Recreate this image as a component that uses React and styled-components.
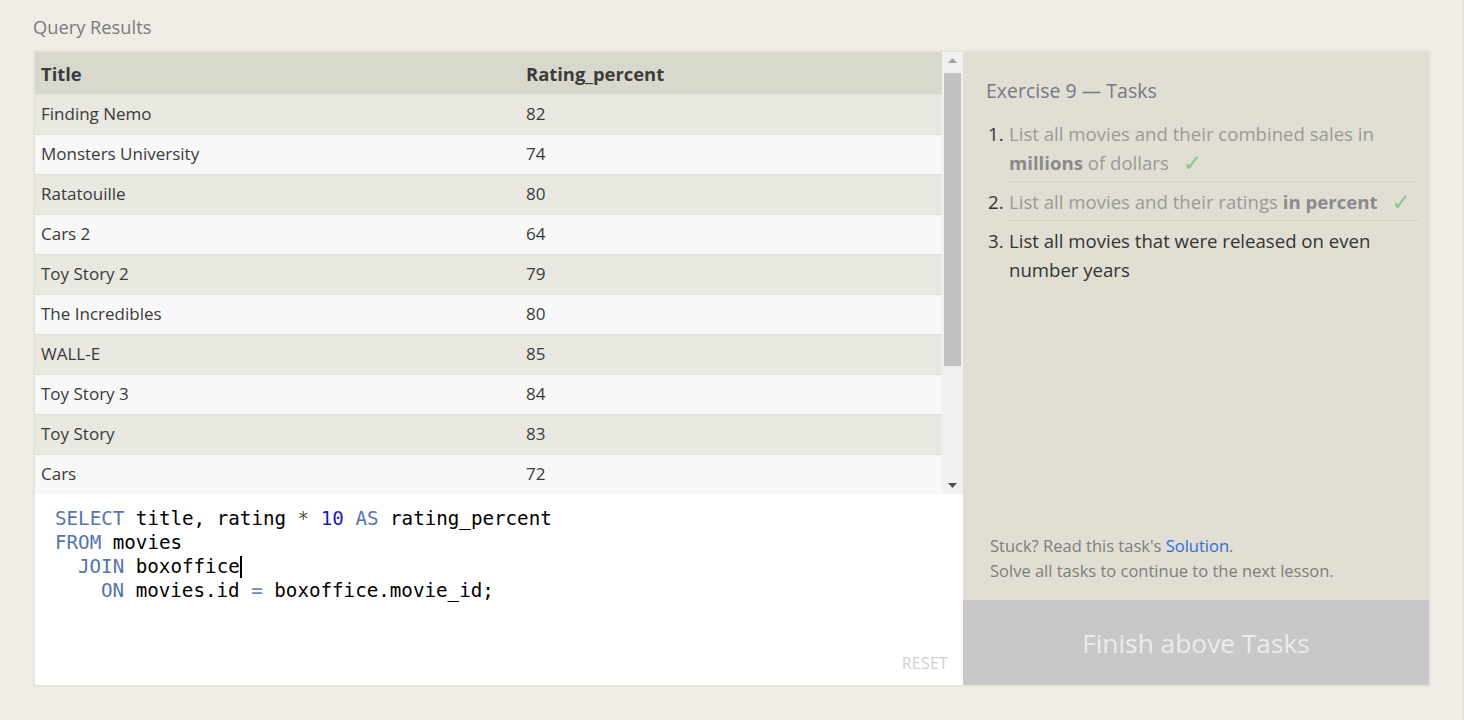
import React from "react";
import styled, { createGlobalStyle } from "styled-components";

const Global = createGlobalStyle`
  html, body { margin: 0; padding: 0; background: #efede6; }
  body { font-family: "Open Sans", "Noto Sans", sans-serif; color: #333; }
  * { box-sizing: border-box; }
`;

const Page = styled.div`
  width: 1464px;
  height: 720px;
  padding: 15px 34px 0 33px;
  border-right: 1px solid #e2e0d8;
`;

const Heading = styled.div`
  font-size: 18.3px;
  line-height: 24px;
  color: #7b7b7b;
  margin-bottom: 11px;
`;

const Panel = styled.div`
  display: flex;
  width: 1398px;
  border: 2px solid #e6e5dc;
`;

const LeftCol = styled.div`
  display: flex;
  flex-direction: column;
  width: 928px;
`;

const TableWrap = styled.div`
  display: flex;
  height: 442px;
  background: #f8f8f8;
`;

const TableArea = styled.div`
  flex: 1;
  overflow: hidden;
`;

const Table = styled.table`
  width: 100%;
  border-collapse: collapse;
  font-size: 17px;
`;

const Th = styled.th`
  text-align: left;
  font-weight: 700;
  font-size: 18.4px;
  color: #3c3c3c;
  background: #d9d8cc;
  height: 42px;
  padding: 1px 6px 0;
  border-bottom: 1px solid #e3e2dc;
  width: ${(p) => p.$w || "auto"};
`;

const Tr = styled.tr`
  background: ${(p) => (p.$odd ? "#e9e8e1" : "#f8f8f8")};
`;

const Td = styled.td`
  height: 40px;
  padding: 0 6px 1px;
  color: #3a3a3a;
  border-bottom: 1px solid #e0dfda;
`;

const Scrollbar = styled.div`
  width: 21px;
  background: #f0f0f0;
  display: flex;
  flex-direction: column;
  align-items: center;
`;

const Arrow = styled.div`
  height: 17px;
  width: 100%;
  display: flex;
  align-items: center;
  justify-content: center;
`;

const Thumb = styled.div`
  width: 17px;
  height: 293px;
  margin-top: 4px;
  background: #c1c1c1;
`;

const Track = styled.div`
  flex: 1;
`;

const Editor = styled.div`
  position: relative;
  height: 191px;
  background: #fff;
  padding: 13px 20px;
  font-family: "DejaVu Sans Mono", "Liberation Mono", monospace;
  font-size: 19.2px;
  line-height: 24px;
  color: #000;
`;

const CodeLine = styled.div`
  white-space: pre;
  padding-left: ${(p) => p.$indent || 0}px;
`;

const Kw = styled.span`
  color: #5574ae;
`;
const Num = styled.span`
  color: #1c1cb8;
`;
const Op = styled.span`
  color: ${(p) => p.$c || "#555"};
`;

const Caret = styled.span`
  display: inline-block;
  width: 2px;
  height: 22px;
  background: #000;
  vertical-align: -5px;
`;

const Reset = styled.div`
  position: absolute;
  right: 15px;
  bottom: 10px;
  font-family: "Open Sans", sans-serif;
  font-size: 16px;
  color: #cfcfcf;
  letter-spacing: 0.2px;
`;

const RightCol = styled.div`
  flex: 1;
  display: flex;
  flex-direction: column;
  background: #e1dfd4;
`;

const TaskPanel = styled.div`
  flex: 1;
  display: flex;
  flex-direction: column;
  padding: 25px 10px 17px 23px;
`;

const TaskTitle = styled.div`
  font-size: 19.5px;
  line-height: 28px;
  color: #737986;
  margin-bottom: 14px;
`;

const TaskList = styled.ol`
  list-style: none;
  margin: 0;
  padding: 0;
`;

const TaskItem = styled.li`
  display: flex;
  font-size: 18.6px;
  line-height: 29px;
  margin-bottom: ${(p) => (p.$last ? 0 : 5)}px;
`;

const TaskNum = styled.span`
  width: 23px;
  flex-shrink: 0;
  padding-left: 2px;
  color: #333;
`;

const TaskText = styled.span`
  flex: 1;
  color: ${(p) => (p.$done ? "#9a9a9a" : "#333")};
  border-bottom: ${(p) => (p.$last ? "none" : "1px solid #d3d1c6")};
  padding-bottom: 4px;
  b {
    color: #8a8a8a;
    font-weight: 700;
  }
`;

const Check = styled.span`
  display: inline-block;
  font-family: "DejaVu Sans", sans-serif;
  font-size: 23px;
  line-height: 0;
  color: #7fcb8c;
  margin-left: 14px;
  vertical-align: -1px;
`;

const Help = styled.div`
  margin-top: auto;
  padding-left: 4px;
  font-size: 16.5px;
  line-height: 25px;
  color: #7d7d7d;
  a {
    color: #2c6ee0;
    text-decoration: none;
  }
`;

const FinishButton = styled.div`
  height: 85px;
  background: #c8c8c8;
  color: #ececec;
  font-size: 26.3px;
  display: flex;
  align-items: center;
  justify-content: center;
`;

const rows = [
  ["Finding Nemo", 82],
  ["Monsters University", 74],
  ["Ratatouille", 80],
  ["Cars 2", 64],
  ["Toy Story 2", 79],
  ["The Incredibles", 80],
  ["WALL-E", 85],
  ["Toy Story 3", 84],
  ["Toy Story", 83],
  ["Cars", 72],
];

const Tri = ({ down }) => (
  <svg width="9" height="5" viewBox="0 0 9 5">
    <polygon points={down ? "0,0 9,0 4.5,5" : "0,5 9,5 4.5,0"} fill={down ? "#505050" : "#a3a3a3"} />
  </svg>
);

export default function App() {
  return (
    <>
      <Global />
      <Page>
        <Heading>Query Results</Heading>
        <Panel>
          <LeftCol>
            <TableWrap>
              <TableArea>
                <Table>
                  <thead>
                    <tr>
                      <Th $w="485px">Title</Th>
                      <Th>Rating_percent</Th>
                    </tr>
                  </thead>
                  <tbody>
                    {rows.map(([t, r], i) => (
                      <Tr key={t} $odd={i % 2 === 0}>
                        <Td>{t}</Td>
                        <Td>{r}</Td>
                      </Tr>
                    ))}
                  </tbody>
                </Table>
              </TableArea>
              <Scrollbar>
                <Arrow>
                  <Tri />
                </Arrow>
                <Thumb />
                <Track />
                <Arrow>
                  <Tri down />
                </Arrow>
              </Scrollbar>
            </TableWrap>
            <Editor>
              <CodeLine>
                <Kw>SELECT</Kw> title, rating <Op>*</Op> <Num>10</Num> <Kw>AS</Kw> rating_percent
              </CodeLine>
              <CodeLine>
                <Kw>FROM</Kw> movies
              </CodeLine>
              <CodeLine $indent={23}>
                <Kw>JOIN</Kw> boxoffice<Caret />
              </CodeLine>
              <CodeLine $indent={46}>
                <Kw>ON</Kw> movies.id <Op $c="#6f86b8">=</Op> boxoffice.movie_id;
              </CodeLine>
              <Reset>RESET</Reset>
            </Editor>
          </LeftCol>
          <RightCol>
            <TaskPanel>
              <TaskTitle>Exercise 9 — Tasks</TaskTitle>
              <TaskList>
                <TaskItem>
                  <TaskNum>1.</TaskNum>
                  <TaskText $done>
                    List all movies and their combined sales in <b>millions</b> of dollars
                    <Check>✓</Check>
                  </TaskText>
                </TaskItem>
                <TaskItem>
                  <TaskNum>2.</TaskNum>
                  <TaskText $done>
                    List all movies and their ratings <b>in percent</b>
                    <Check>✓</Check>
                  </TaskText>
                </TaskItem>
                <TaskItem $last>
                  <TaskNum>3.</TaskNum>
                  <TaskText $last>List all movies that were released on even number years</TaskText>
                </TaskItem>
              </TaskList>
              <Help>
                Stuck? Read this task's <a href="#">Solution</a>.
                <br />
                Solve all tasks to continue to the next lesson.
              </Help>
            </TaskPanel>
            <FinishButton>Finish above Tasks</FinishButton>
          </RightCol>
        </Panel>
      </Page>
    </>
  );
}
